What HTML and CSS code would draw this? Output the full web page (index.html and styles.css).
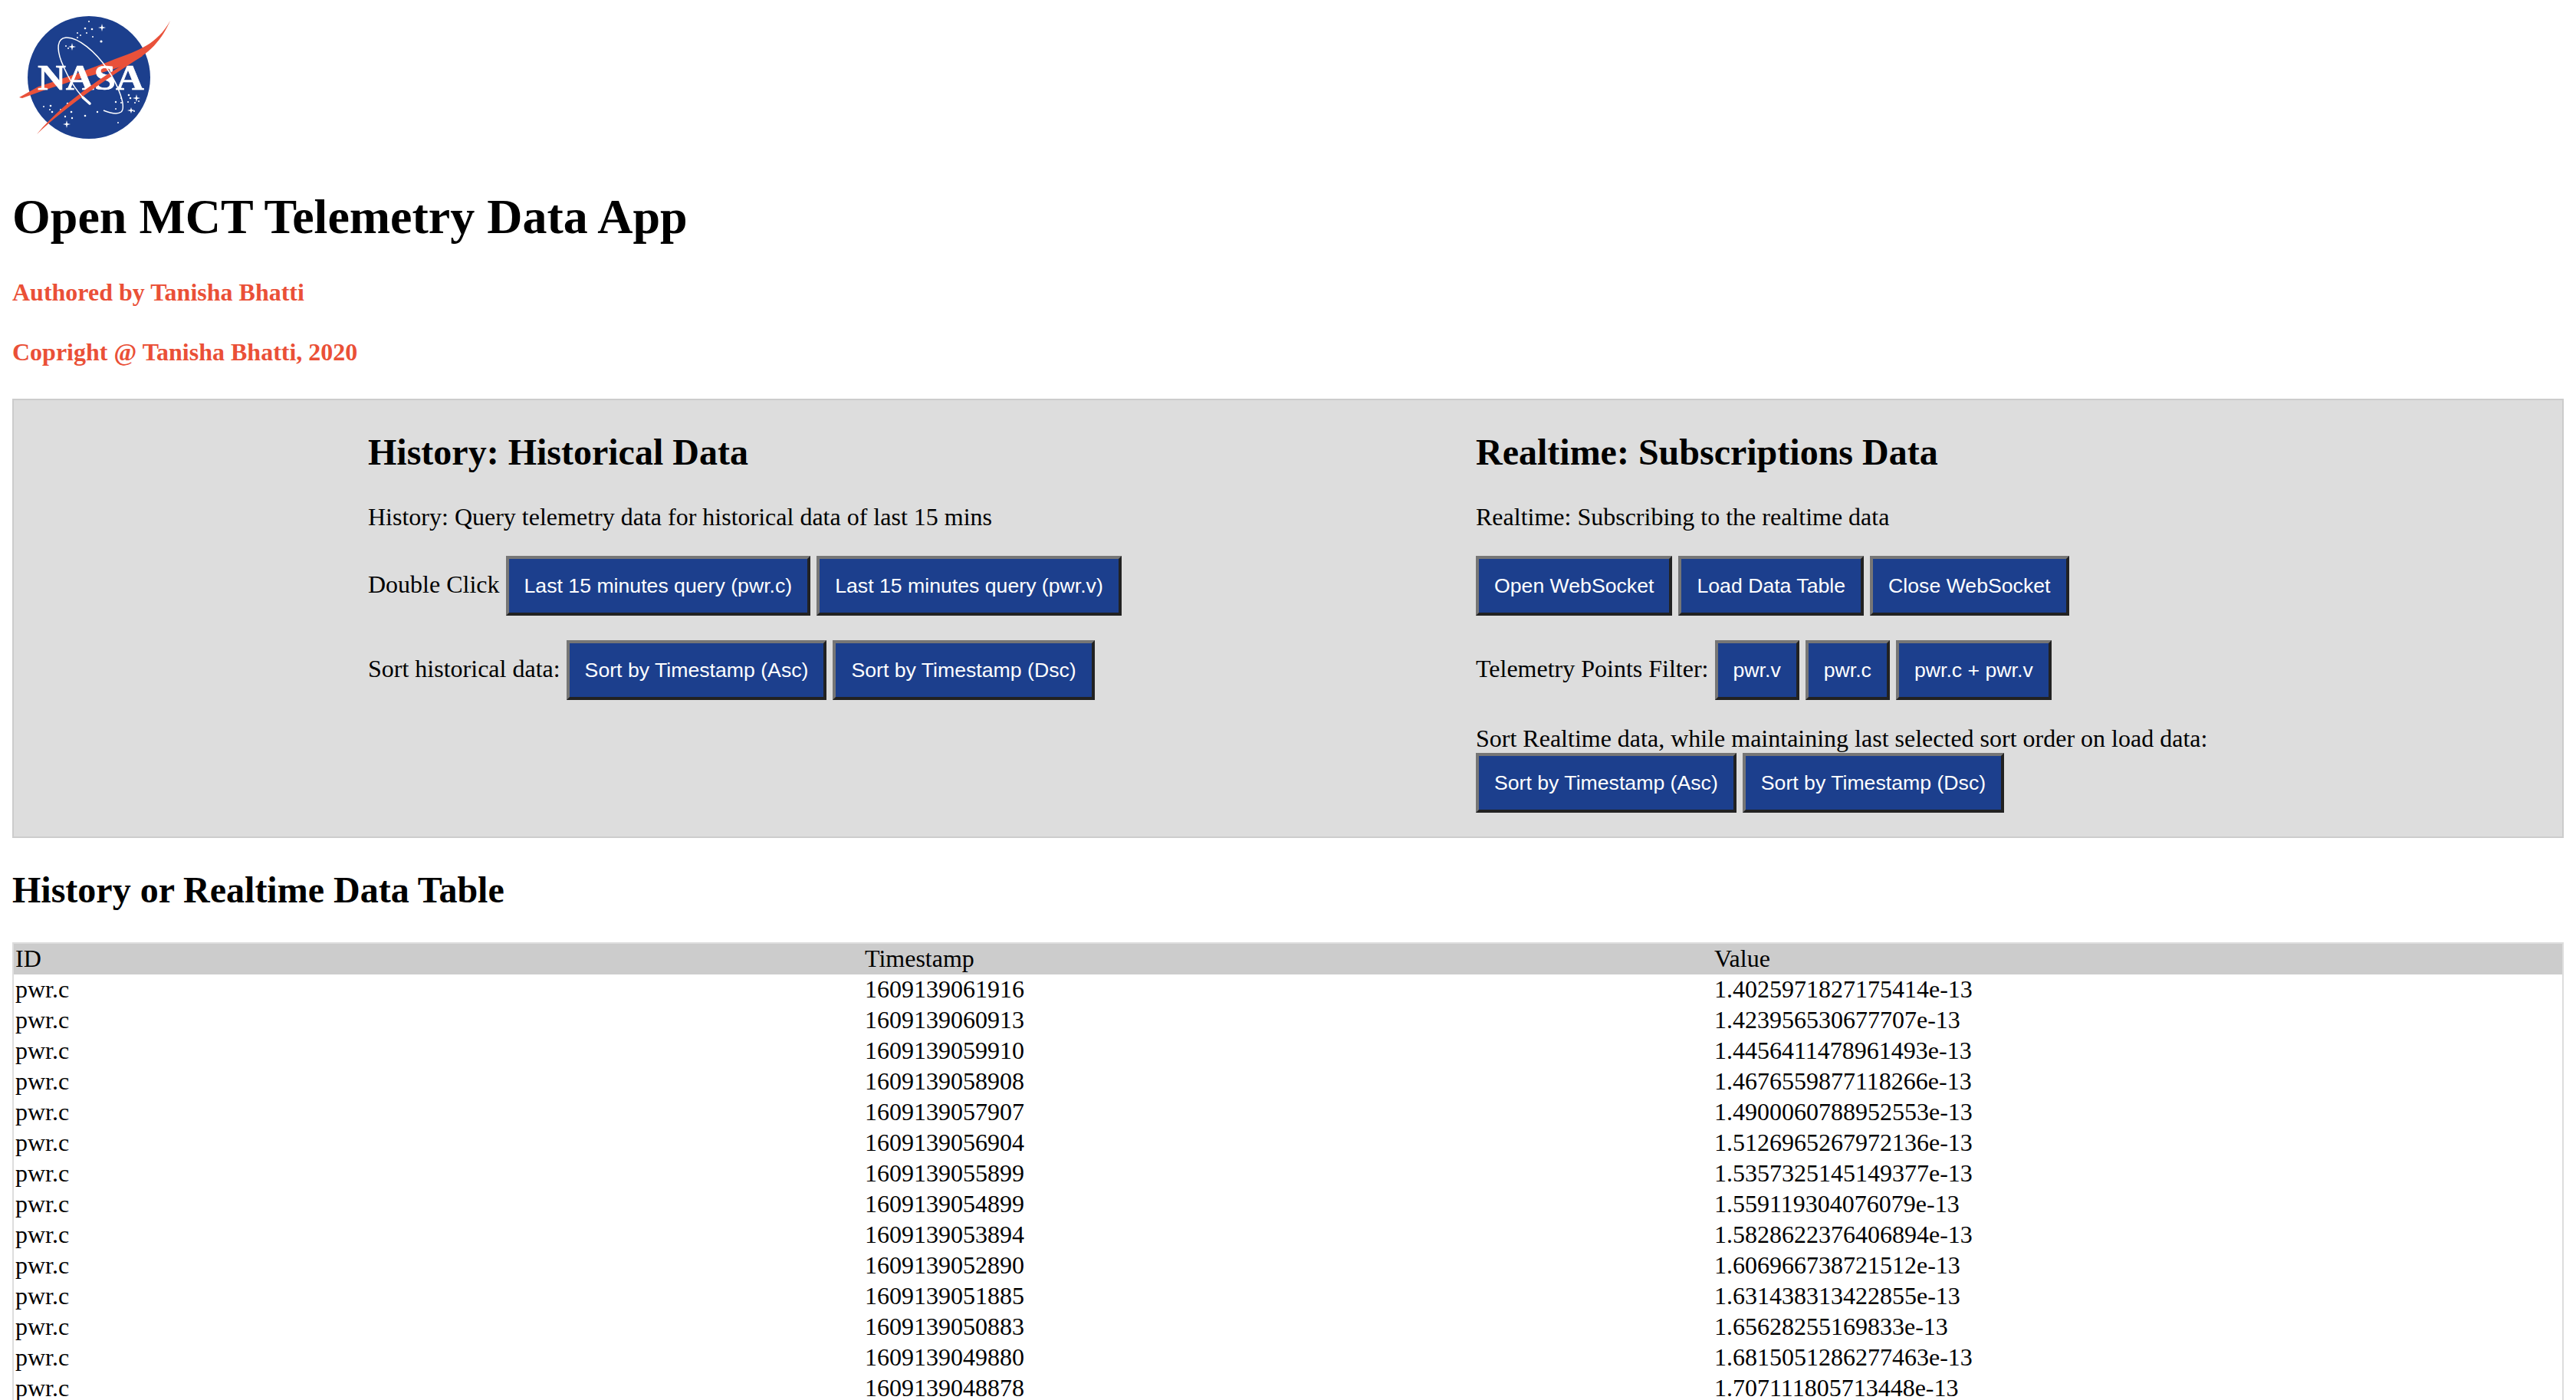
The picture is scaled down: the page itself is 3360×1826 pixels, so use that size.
FILE: index.html
```html
<!DOCTYPE html>
<html lang="en">
<head>
    <meta charset="UTF-8">
    <title>Open MCT Telemetry Data App</title>
    <link rel="stylesheet" href="styles.css">
</head>
<body>

    <svg class="logo" viewBox="16 16 214 187" role="img" aria-label="NASA logo">
        <circle cx="116" cy="101" r="80" fill="#1c3f8d"/>
        <g fill="#fff">
            <circle cx="116" cy="28" r="1"/><circle cx="111" cy="37" r="1.3"/><circle cx="120" cy="38" r="1.3"/>
            <path d="M133 31l1 4 4 1-4 1-1 4-1-4-4-1 4-1z"/>
            <circle cx="113" cy="43" r="1"/><circle cx="121" cy="48" r="1"/><circle cx="132" cy="54" r="1.6"/>
            <circle cx="101" cy="43" r="1"/><circle cx="105" cy="46" r="1"/><circle cx="101" cy="49" r="1"/>
            <path d="M94 56l1 4 4 1-4 1-1 4-1-4-4-1 4-1z"/><circle cx="86" cy="60" r="1"/><circle cx="89" cy="63" r="1"/>
            <circle cx="168" cy="124" r="1.3"/><circle cx="170" cy="128" r="1.3"/><path d="M178 123l1 4 4 1-4 1-1 4-1-4-4-1 4-1z"/>
            <circle cx="151" cy="133" r="1.2"/><circle cx="158" cy="128" r="1"/><circle cx="158" cy="134" r="1"/>
            <circle cx="176" cy="134" r="1"/><circle cx="181" cy="132" r="1"/><circle cx="167" cy="133" r="1"/>
            <path d="M171 140l1 3 4 1-4 1-1 3-1-3-4-1 4-1z"/><circle cx="175" cy="145" r="1"/><circle cx="151" cy="142" r="1"/>
            <circle cx="127" cy="146" r="1.2"/><circle cx="111" cy="151" r="1.3"/><circle cx="154" cy="160" r="1"/>
            <circle cx="57" cy="139" r="1"/><circle cx="66" cy="138" r="1.3"/><circle cx="65" cy="143" r="1"/><circle cx="68" cy="146" r="1.3"/>
            <circle cx="79" cy="143" r="1"/><circle cx="93" cy="146" r="1.3"/><circle cx="85" cy="152" r="1.2"/><circle cx="94" cy="154" r="1.2"/>
            <circle cx="88" cy="135" r="1.2"/><path d="M87 157l1 4 4 1-4 1-1 4-1-4-4-1 4-1z"/>
        </g>
        <path d="M222 27C205 58 180 66 150 77C125 87 90 100 50 113L25 127L29 128C50 120 80 110 113 100C130 96 150 90 165 84C195 72 212 50 222 27Z" fill="#e9513a"/>
        <text class="logo-text" x="118.5" y="117" text-anchor="middle" textLength="139" lengthAdjust="spacingAndGlyphs">NASA</text>
        <path d="M184 71C150 90 90 125 48 175C85 140 140 102 186 73Z" fill="#e9513a"/>
        <path d="M118 136C100 122 88 100 80 80C74 64 74 50 86 49C102 48 125 68 140 90C155 112 165 140 158 146C153 150 145 148 135 144" fill="none" stroke="#fff" stroke-width="1.5"/>
        <path d="M108 127L117 135" fill="none" stroke="#fff" stroke-width="3.5" stroke-linecap="round"/>
    </svg>

    <h1>Open MCT Telemetry Data App</h1>
    <h4 class="credit">Authored by Tanisha Bhatti</h4>
    <h4 class="credit">Copright @ Tanisha Bhatti, 2020</h4>

    <div class="panel">
        <div class="panel-col">
            <h2>History: Historical Data</h2>
            <p>History: Query telemetry data for historical data of last 15 mins</p>
            <p>Double Click
                <button class="btn">Last 15 minutes query (pwr.c)</button>
                <button class="btn">Last 15 minutes query (pwr.v)</button>
            </p>
            <p>Sort historical data:
                <button class="btn">Sort by Timestamp (Asc)</button>
                <button class="btn">Sort by Timestamp (Dsc)</button>
            </p>
        </div>
        <div class="panel-col">
            <h2>Realtime: Subscriptions Data</h2>
            <p>Realtime: Subscribing to the realtime data</p>
            <p>
                <button class="btn">Open WebSocket</button>
                <button class="btn">Load Data Table</button>
                <button class="btn">Close WebSocket</button>
            </p>
            <p>Telemetry Points Filter:
                <button class="btn">pwr.v</button>
                <button class="btn">pwr.c</button>
                <button class="btn">pwr.c + pwr.v</button>
            </p>
            <p class="sort-row">Sort Realtime data, while maintaining last selected sort order on load data:<br>
                <button class="btn">Sort by Timestamp (Asc)</button>
                <button class="btn">Sort by Timestamp (Dsc)</button>
            </p>
        </div>
    </div>

    <h2>History or Realtime Data Table</h2>

    <table class="data-table">
        <thead>
            <tr><th>ID</th><th>Timestamp</th><th>Value</th></tr>
        </thead>
        <tbody>
            <tr><td>pwr.c</td><td>1609139061916</td><td>1.4025971827175414e-13</td></tr>
            <tr><td>pwr.c</td><td>1609139060913</td><td>1.423956530677707e-13</td></tr>
            <tr><td>pwr.c</td><td>1609139059910</td><td>1.4456411478961493e-13</td></tr>
            <tr><td>pwr.c</td><td>1609139058908</td><td>1.4676559877118266e-13</td></tr>
            <tr><td>pwr.c</td><td>1609139057907</td><td>1.4900060788952553e-13</td></tr>
            <tr><td>pwr.c</td><td>1609139056904</td><td>1.5126965267972136e-13</td></tr>
            <tr><td>pwr.c</td><td>1609139055899</td><td>1.5357325145149377e-13</td></tr>
            <tr><td>pwr.c</td><td>1609139054899</td><td>1.559119304076079e-13</td></tr>
            <tr><td>pwr.c</td><td>1609139053894</td><td>1.5828622376406894e-13</td></tr>
            <tr><td>pwr.c</td><td>1609139052890</td><td>1.606966738721512e-13</td></tr>
            <tr><td>pwr.c</td><td>1609139051885</td><td>1.631438313422855e-13</td></tr>
            <tr><td>pwr.c</td><td>1609139050883</td><td>1.65628255169833e-13</td></tr>
            <tr><td>pwr.c</td><td>1609139049880</td><td>1.6815051286277463e-13</td></tr>
            <tr><td>pwr.c</td><td>1609139048878</td><td>1.707111805713448e-13</td></tr>
        </tbody>
    </table>

</body>
</html>
```

FILE: styles.css
```css
html {
    height: 100%;
    overflow: hidden;
}
body {
    font-family: "Liberation Serif", serif;
    font-size: 32px;
    color: #000000;
    background-color: #ffffff;
    margin: 16px;
}
.logo {
    display: block;
    width: 214px;
    height: 187px;
}
.logo-text {
    font-family: "Liberation Serif", serif;
    font-weight: bold;
    font-size: 46px;
    fill: #ffffff;
    stroke: #ffffff;
    stroke-width: 0.6;
}
h1 {
    font-size: 64px;
    margin: 43px 0;
}
h2 {
    font-size: 48px;
    margin: 40px 0;
}
h4.credit {
    font-size: 32px;
    color: #ea5037;
    margin: 41px 0;
}
p {
    margin: 32px 0;
}
.panel {
    display: grid;
    grid-template-columns: 1445px 1fr;
    padding-left: 462px;
    margin-top: 42px;
    background-color: #dddddd;
    border: 2px solid #cccccc;
}
.panel-col h2 {
    margin-bottom: 39px;
}
.sort-row {
    margin: 31px 0;
}
.btn {
    font-family: "Liberation Sans", Arial, sans-serif;
    font-size: 26.67px;
    line-height: 30px;
    color: #ffffff;
    background-color: #1c3f8d;
    border: 4px solid;
    border-color: #767676 #222222 #222222 #767676;
    padding: 20px;
}
.data-table {
    width: 100%;
    table-layout: fixed;
    border-collapse: separate;
    border-spacing: 0;
    border: 2px solid #dddddd;
    margin-top: 41px;
}
.data-table th {
    background-color: #cccccc;
    font-weight: normal;
    text-align: left;
    height: 39px;
    padding: 0 2px 1px;
}
.data-table td {
    height: 39px;
    padding: 0 2px 1px;
}
```
